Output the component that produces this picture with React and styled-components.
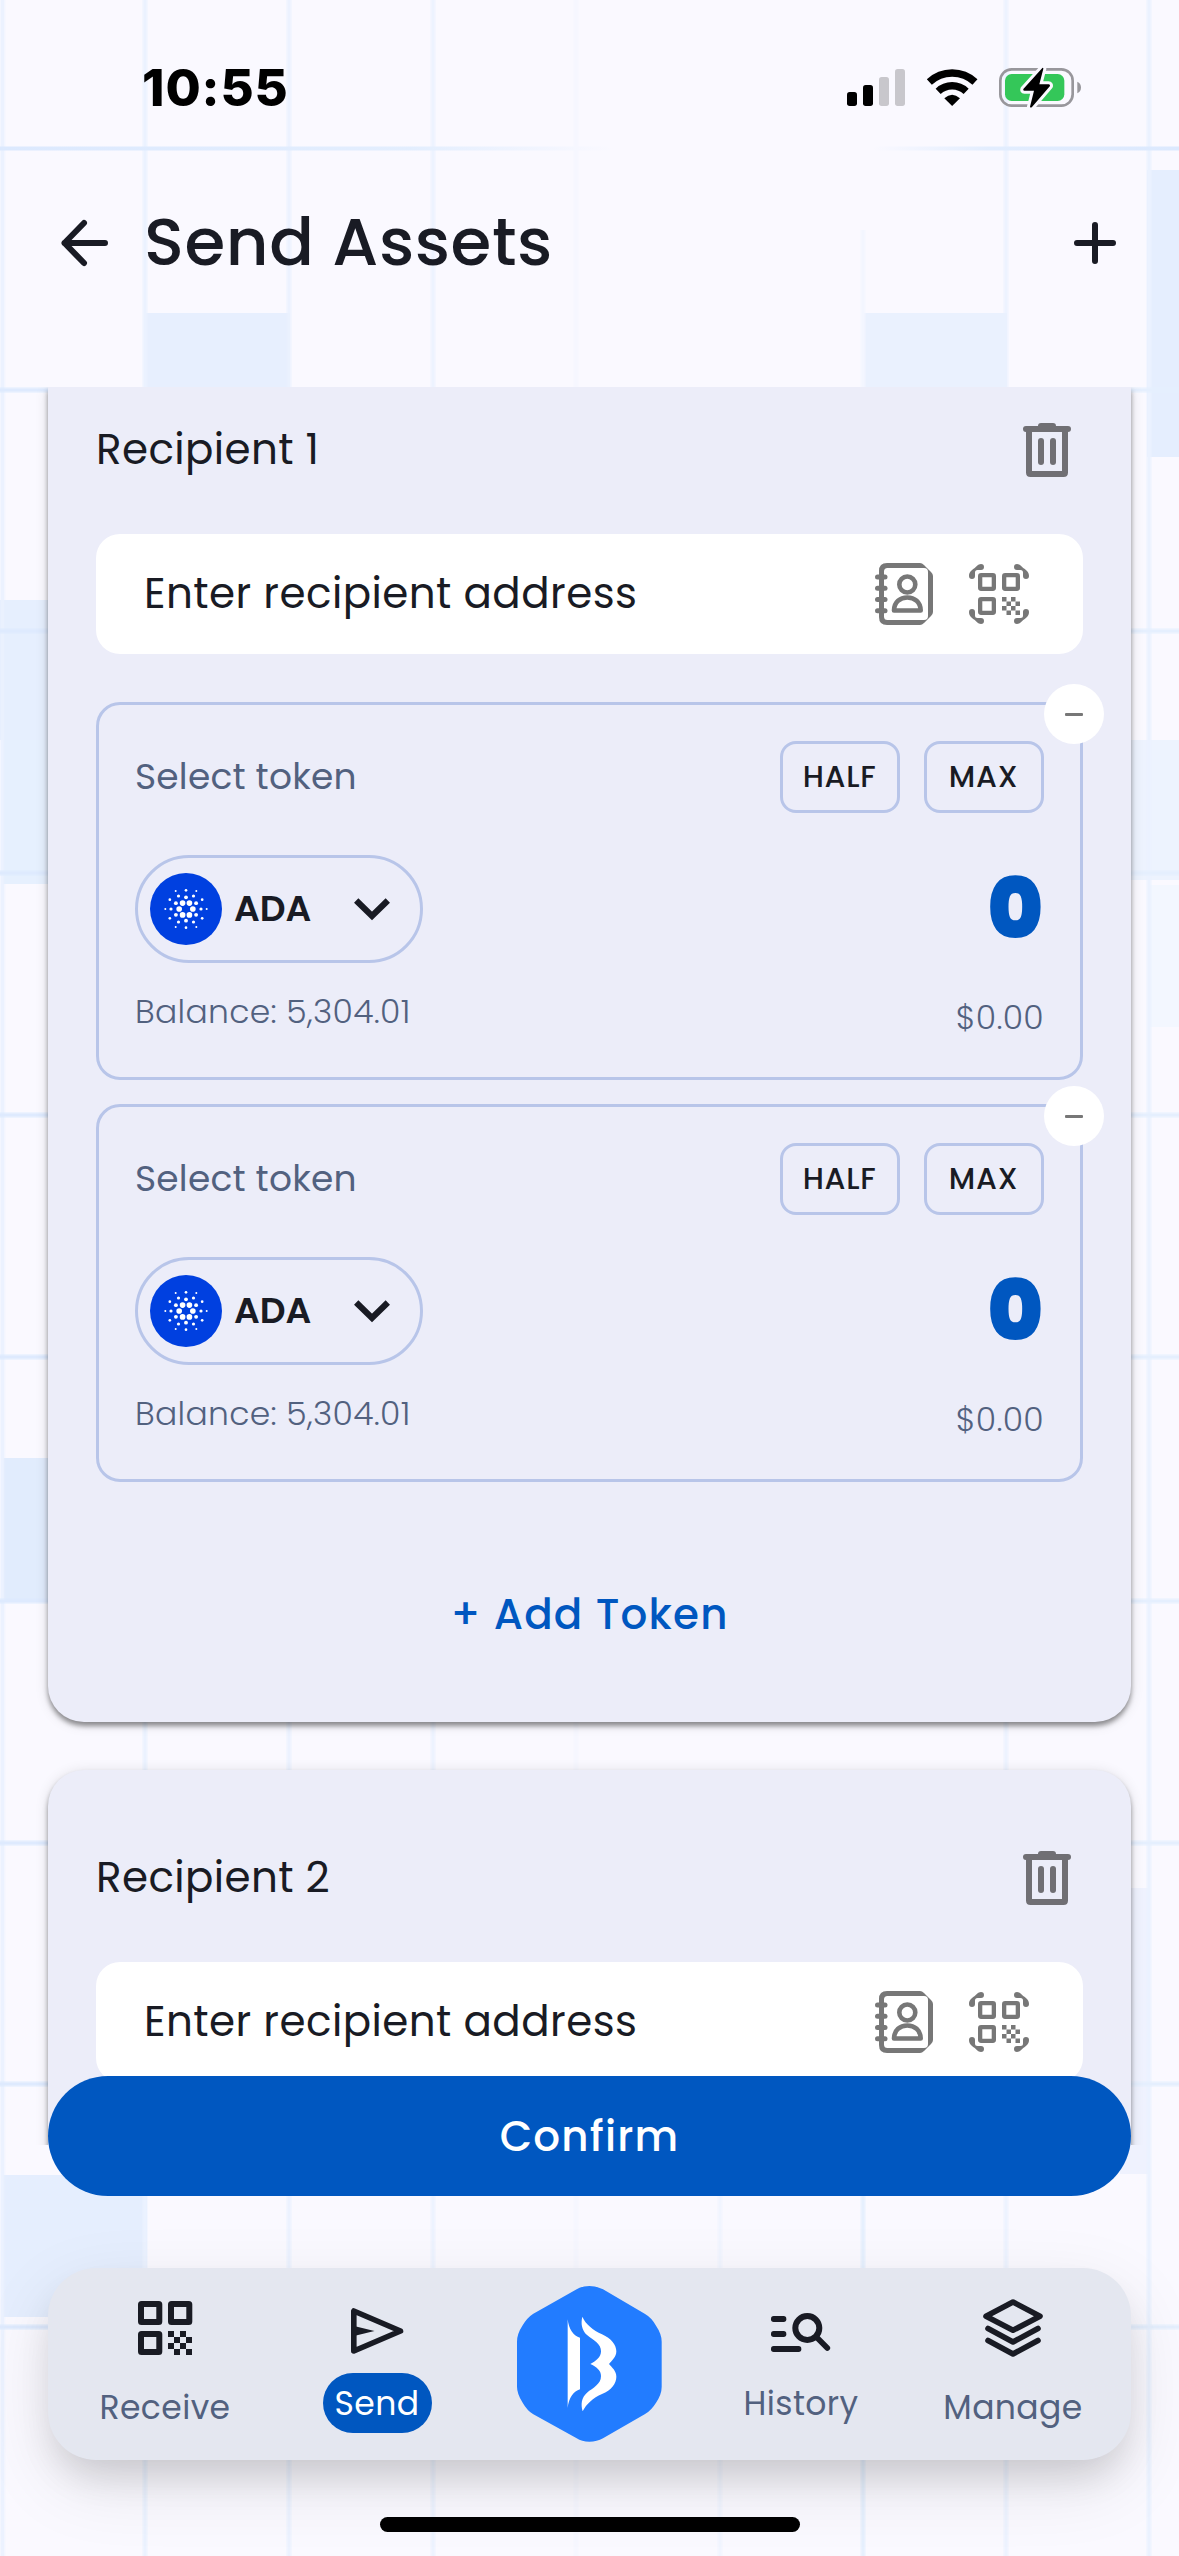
import React from "react";
import styled, { createGlobalStyle } from "styled-components";

const ink = "#191b24";
const muted = "#52617f";
const outline = "#b8c5e9";
const brand = "#0057c0";
const grey = "#777777";

const GlobalStyle = createGlobalStyle`
  *, *::before, *::after { box-sizing: border-box; }
  html, body { margin: 0; padding: 0; background: #faf9ff; }
  body {
    font-family: Poppins, Inter, "Open Sans", sans-serif;
    color: ${ink};
  }
  button {
    margin: 0; padding: 0; border: 0; background: none;
    font: inherit; color: inherit;
  }
  svg { display: block; flex: none; overflow: visible; }
`;

const Screen = styled.div`
  position: relative;
  width: 1179px;
  height: 2556px;
  overflow: hidden;
  display: flex;
  flex-direction: column;
  background: #faf9ff;
  isolation: isolate;
`;

const Backdrop = styled.svg`
  position: absolute;
  inset: 0;
  z-index: -1;
`;

const Label = styled.span`
  display: block;
  white-space: nowrap;
  line-height: ${(p) => p.$line || 48}px;
  font-size: ${(p) => p.$size}px;
  font-weight: ${(p) => p.$weight || 400};
  letter-spacing: ${(p) => p.$track || 0}px;
  color: ${(p) => p.$color || ink};
`;

const Clock = styled(Label)`
  font-family: Inter, "Liberation Sans", sans-serif;
  color: #000;
`;

const StatusBar = styled.div`
  flex: none;
  height: 175px;
  padding: 0 98px 0 142px;
  display: flex;
  align-items: center;
  justify-content: space-between;
`;

const StatusIcons = styled.div`
  display: flex;
  align-items: center;
  gap: 22px;
`;

const Header = styled.header`
  flex: none;
  height: 212px;
  padding: 0 63px 76px 61px;
  display: flex;
  align-items: center;
`;

const HeaderTitle = styled.h1`
  flex: 1;
  margin: 0 0 3px 36px;
`;

const IconButton = styled.button`
  display: grid;
  place-items: center;
`;

const ScrollArea = styled.main`
  flex: none;
  height: 1758px;
  overflow: hidden;
  display: flex;
  flex-direction: column;
  padding: 0 48px;
`;

const Card = styled.section`
  flex: none;
  padding: ${(p) => (p.$scrolled ? 3 : 48)}px 48px 0;
  height: ${(p) => p.$height}px;
  margin-bottom: 48px;
  border-radius: ${(p) => (p.$scrolled ? "0 0 36px 36px" : "36px")};
  background: #ecedf9;
  box-shadow: 0 4px 5px rgba(0, 0, 0, 0.4), 0 2px 14px rgba(0, 0, 0, 0.12);
`;

const CardHeader = styled.div`
  height: 120px;
  padding-right: 12px;
  display: flex;
  align-items: center;
  justify-content: space-between;
`;

const AddressField = styled.div`
  height: 120px;
  margin-top: 24px;
  padding: 0 54px 0 48px;
  border-radius: 24px;
  background: #fff;
  display: flex;
  align-items: center;
  gap: 36px;
`;

const Grow = styled.div`
  flex: 1;
`;

const TokenList = styled.div`
  margin-top: 48px;
  display: flex;
  flex-direction: column;
  gap: 24px;
`;

const TokenBox = styled.div`
  position: relative;
  height: 378px;
  padding: 36px;
  border: 3px solid ${outline};
  border-radius: 24px;
`;

const RemoveBadge = styled.button`
  position: absolute;
  top: -21px;
  right: -24px;
  width: 60px;
  height: 60px;
  border-radius: 50%;
  background: #fff;
  display: grid;
  place-items: center;
`;

const Dash = styled.span`
  width: 18px;
  height: 3px;
  border-radius: 1px;
  background: ${grey};
`;

const TokenTop = styled.div`
  height: 72px;
  display: flex;
  align-items: center;
  gap: 24px;
`;

const ChipButton = styled.button`
  width: 120px;
  height: 72px;
  padding-right: 1px;
  border: 3px solid ${outline};
  border-radius: 16px;
  display: grid;
  place-items: center;
`;

const TokenBody = styled.div`
  margin-top: 42px;
  display: flex;
  justify-content: space-between;
`;

const TokenSide = styled.div`
  display: flex;
  flex-direction: column;
  align-items: flex-start;
  gap: 25px;
`;

const AmountSide = styled.div`
  display: flex;
  flex-direction: column;
  align-items: flex-end;
  gap: 33px;
`;

const Amount = styled.div`
  padding: 2px 1px 0 0;
`;

const TokenPill = styled.button`
  width: 288px;
  height: 108px;
  padding: 0 30px 0 12px;
  border: 3px solid ${outline};
  border-radius: 54px;
  display: flex;
  align-items: center;
`;

const PillName = styled.div`
  flex: 1;
  padding-left: 12px;
  text-align: left;
`;

const AddToken = styled.button`
  width: 100%;
  height: 96px;
  margin-top: 85px;
  display: grid;
  place-items: center;
`;

const ConfirmButton = styled.button`
  position: relative;
  flex: none;
  height: 120px;
  margin: -69px 48px 0;
  padding-top: 1px;
  border-radius: 60px;
  background: ${brand};
  display: grid;
  place-items: center;
`;

const NavBar = styled.nav`
  flex: none;
  height: 192px;
  margin: 72px 48px 0;
  padding: 0 12px 0 11px;
  border-radius: 48px;
  background: #e4e7f0;
  box-shadow: 0 24px 72px rgba(0, 0, 0, 0.1), 0 22px 36px -8px rgba(0, 0, 0, 0.13);
  display: flex;
`;

const NavItem = styled.button`
  flex: 1;
  display: flex;
  flex-direction: column;
  align-items: center;
  justify-content: flex-start;
`;

const NavGlyph = styled.div`
  height: ${(p) => p.$slot}px;
  margin-bottom: ${(p) => p.$drop - p.$slot}px;
  display: grid;
  place-items: center;
`;

const NavPill = styled.div`
  height: 60px;
  min-width: 109px;
  padding: 1px 11px 0;
  border-radius: 30px;
  background: ${(p) => (p.$active ? brand : "transparent")};
  display: grid;
  place-items: center;
`;

const LogoSlot = styled.div`
  height: 192px;
  display: grid;
  place-items: center;
`;

const HomeIndicator = styled.div`
  flex: none;
  width: 420px;
  height: 15px;
  margin: 57px auto 0;
  border-radius: 8px;
  background: #000;
`;

const verticals = [
  [2.5, 0.9], [145, 1], [289, 0.9], [433, 0.8], [576, 0.2], [1006, 0.8], [1149, 1],
];
const horizontals = [390, 631, 873, 1115, 1357, 1601, 1843, 2084, 2327];
const tiles = [
  [145, 313, 145, 74, "#e7effe"],
  [862, 313, 145, 74, "#eaf1fe"],
  [1147, 170, 32, 287, "#e5eefe"],
  [0, 600, 60, 140, "#e6effe"],
  [3, 740, 60, 144, "#e6f0fe"],
  [3, 1458, 60, 143, "#e1ecfd"],
  [3, 2175, 144, 142, "#e5eefe"],
  [1120, 740, 59, 140, "#edf3fe"],
  [1149, 885, 30, 142, "#f3f7ff"],
  [1120, 1888, 28, 286, "#eff2fe"],
];

const Rule = ({ x, y, w, h, fill, opacity = 1 }) => {
  const tall = h > w;
  return (
    <g fill={fill} opacity={opacity}>
      <rect x={tall ? x - 3 : x} y={tall ? y : y - 3} width={tall ? 6 : w} height={tall ? h : 6} opacity="0.45" />
      <rect x={tall ? x - 1.5 : x} y={tall ? y : y - 1.5} width={tall ? 3 : w} height={tall ? h : 3} />
    </g>
  );
};

const GridBackdrop = () => (
  <Backdrop width="1179" height="2556" viewBox="0 0 1179 2556">
    <defs>
      <linearGradient id="topRule" x1="0" x2="1" y1="0" y2="0">
        <stop offset="0" stopColor="#dce9fe" />
        <stop offset="0.35" stopColor="#e3eefe" />
        <stop offset="0.52" stopColor="#faf9ff" />
        <stop offset="0.74" stopColor="#faf9ff" />
        <stop offset="0.84" stopColor="#e2edfe" />
        <stop offset="1" stopColor="#dce9fe" />
      </linearGradient>
    </defs>
    {tiles.map(([x, y, w, h, c]) => (
      <rect key={`${x}-${y}`} x={x} y={y} width={w} height={h} fill={c} />
    ))}
    {verticals.map(([x, o]) => (
      <Rule key={x} x={x} y={0} w={0} h={2556} fill="#ebf2ff" opacity={o} />
    ))}
    <Rule x={863} y={230} w={0} h={160} fill="#f3f6ff" />
    <Rule x={863} y={2190} w={0} h={366} fill="#e6f0fe" />
    <Rule x={720} y={2190} w={0} h={366} fill="#f1f5ff" />
    <rect x="0" y="146.500" width="1179" height="4" fill="url(#topRule)" />
    {horizontals.map((y) => (
      <g key={y}>
        <Rule x={0} y={y} w={60} h={0} fill="#deeafe" />
        <Rule x={1120} y={y} w={59} h={0} fill="#e5effe" />
      </g>
    ))}
  </Backdrop>
);

const SignalIcon = () => (
  <svg width="58" height="37" viewBox="198 87 174 111">
    <rect x="198" y="156" width="30" height="42" rx="8" />
    <rect x="246" y="135" width="30" height="63" rx="8" />
    <rect x="294" y="111" width="30" height="87" rx="8" fill="#c8c7cc" />
    <rect x="342" y="87" width="30" height="111" rx="8" fill="#c8c7cc" />
  </svg>
);

const WifiIcon = () => (
  <svg width="50.3" height="37" viewBox="439 87 151 111">
    <path d="M446 126A100 100 0 0 1 583 126" fill="none" stroke="#000" strokeWidth="22" />
    <path d="M472.500 154A61 61 0 0 1 556.500 154" fill="none" stroke="#000" strokeWidth="22" />
    <path d="M514.500 198L491 175Q514.500 153 538 175Z" />
  </svg>
);

const BatteryIcon = () => (
  <svg width="82" height="41" viewBox="657 81 246 123">
    <rect x="661" y="88" width="217" height="109" rx="34" fill="none" stroke="#98979c" strokeWidth="8" />
    <path d="M892 125Q903 130 903 142.500T892 160Z" fill="#98979c" />
    <rect x="675" y="102" width="178" height="81" rx="20" fill="#34c759" />
    <path
      d="M787 84L730 147Q728 152 733 152H762L750 200Q751 205 756 201L810 138Q811 133 806 133H778L790 86Q790 81 787 84Z"
      fill="#000" stroke="#faf9ff" strokeWidth="18" strokeLinejoin="round" paintOrder="stroke"
    />
  </svg>
);

const BackIcon = () => (
  <svg width="47" height="46" viewBox="0 0 47 46" fill="none" stroke={ink} strokeWidth="6" strokeLinecap="round" strokeLinejoin="round">
    <path d="M23 3L3.500 23L23 43M3.500 23H44" />
  </svg>
);

const PlusIcon = () => (
  <svg width="42" height="42" viewBox="0 0 42 42" stroke={ink} strokeWidth="6" strokeLinecap="round">
    <path d="M21 3V39M3 21H39" />
  </svg>
);

const TrashIcon = () => (
  <svg width="48" height="54" viewBox="0 0 48 54" fill="#706f74">
    <path d="M18 0H30Q33 0 33 3H45A3 3 0 0 1 45 9H3A3 3 0 0 1 3 3H15Q15 0 18 0Z" />
    <path d="M6 7V49.500Q6 51 7.500 51H40.500Q42 51 42 49.500V7" fill="none" stroke="#706f74" strokeWidth="6" />
    <rect x="15" y="15" width="6" height="27" rx="3" />
    <rect x="27" y="15" width="6" height="27" rx="3" />
  </svg>
);

const ContactIcon = () => (
  <svg width="58" height="62" viewBox="0 0 58 62" fill={grey}>
    <path
      fillRule="evenodd"
      d="M12 0H45Q47 0 49 2L56 9Q58 11 58 13V49Q58 51 56 53L49 60Q47 62 45 62H12Q4 62 4 54V8Q4 0 12 0ZM12.500 5Q9 5 9 8.500V53.500Q9 57 12.500 57H49Q53 57 53 53V9Q53 5 49 5Z"
    />
    <rect x="0" y="11.500" width="12.500" height="5" rx="2.500" />
    <rect x="0" y="22.800" width="12.500" height="5" rx="2.500" />
    <rect x="0" y="34" width="12.500" height="5" rx="2.500" />
    <rect x="0" y="45.200" width="12.500" height="5" rx="2.500" />
    <g fill="none" stroke={grey} strokeWidth="4.600" strokeLinejoin="round">
      <circle cx="32.300" cy="21.500" r="8" />
      <path d="M19 47.500H45.700C45.500 39 39.500 34.500 32.300 34.500S19.200 39 19 47.500Z" />
    </g>
  </svg>
);

const Checker = ({ x, y, cell }) =>
  [0, 1, 2, 3].flatMap((r) =>
    [0, 1].map((c) => (
      <rect
        key={`${r}${c}`}
        x={x + (c * 2 + (r % 2)) * cell}
        y={y + r * cell}
        width={cell}
        height={cell}
      />
    ))
  );

const corner = "M3 15A3 3 0 0 1 0 12C0 8 3 6 5 4.500S9 0 12 0A3 3 0 0 1 12 6H8.500Q6 6 6 8.500V12A3 3 0 0 1 3 15Z";

const ScanIcon = () => (
  <svg width="60" height="60" viewBox="0 0 60 60" fill={grey}>
    <path d={corner} />
    <path d={corner} transform="matrix(-1 0 0 1 60 0)" />
    <path d={corner} transform="matrix(1 0 0 -1 0 60)" />
    <path d={corner} transform="matrix(-1 0 0 -1 60 60)" />
    <g fill="none" stroke={grey} strokeWidth="4.300">
      <rect x="11.150" y="11.150" width="13.700" height="13.700" rx="1" />
      <rect x="35.150" y="11.150" width="13.700" height="13.700" rx="1" />
      <rect x="11.150" y="35.150" width="13.700" height="13.700" rx="1" />
    </g>
    <Checker x={33} y={33} cell={4.5} />
  </svg>
);

const QrIcon = () => (
  <svg width="54" height="54" viewBox="0 0 54 54" fill={ink}>
    <g fill="none" stroke={ink} strokeWidth="6">
      <rect x="3" y="3" width="18.300" height="18" rx="0.500" />
      <rect x="33" y="3" width="18.300" height="18" rx="0.500" />
      <rect x="3" y="33" width="18.300" height="18" rx="0.500" />
    </g>
    <Checker x={30} y={30} cell={6} />
  </svg>
);

const SendIcon = () => (
  <svg width="52" height="46" viewBox="0 0 52 46">
    <path d="M2.800 3V43L49.500 23Z" fill="none" stroke={ink} strokeWidth="5.600" strokeLinejoin="round" />
    <path d="M5 18.500L23.500 23L5 27.500Z" fill={ink} />
  </svg>
);

const HistoryIcon = () => (
  <svg width="59.300" height="39" viewBox="811 111 178 117" fill={ink}>
    <rect x="811" y="120" width="46" height="18" rx="8" />
    <rect x="811" y="165" width="46" height="18" rx="8" />
    <rect x="811" y="210" width="91" height="18" rx="8" />
    <circle cx="920" cy="156" r="36" fill="none" stroke={ink} strokeWidth="18" />
    <path d="M948 184L980 216" stroke={ink} strokeWidth="17" strokeLinecap="round" />
  </svg>
);

const LayersIcon = () => (
  <svg width="60" height="58" viewBox="0 0 60 58" fill="none" stroke={ink} strokeWidth="5.600" strokeLinejoin="round" strokeLinecap="round">
    <path d="M30 3L57 17.200L30 31.300L3 17.200Z" />
    <path d="M5 29.500L30 43L55 29.500" />
    <path d="M5 41.500L30 55L55 41.500" />
  </svg>
);

const Logo = () => (
  <svg width="144.700" height="155.700" viewBox="52 30 434 467" fill="#fff">
    <path
      d="M231 40Q248 30 269 30T310 40L435 113Q456 125 469 149Q486 174 486 197V332Q486 355 469 380Q456 402 435 415L310 487Q292 497 269 497T231 487L101 415Q82 403 69 380Q52 354 52 332V197Q52 174 69 148Q82 125 101 113Z"
      fill="#227cff"
    />
    <path d="M204 130C207 160 222 180 241 185V340C222 346 207 365 204 396Z" />
    <path d="M248 122C258 145 280 162 307 175C335 188 350 207 350 226C350 244 336 254 328 264C336 274 350 284 350 302C350 323 335 342 307 354C280 366 260 384 249 406C243 385 245 365 262 350C280 335 304 325 304 300C304 283 290 272 272 264C290 255 304 243 304 226C304 203 282 193 262 177C246 162 243 142 248 122Z" />
  </svg>
);

const ring = (d, r, start) =>
  [0, 1, 2, 3, 4, 5].map((i) => {
    const a = ((start + i * 60) * Math.PI) / 180;
    return <circle key={`${d}-${i}`} cx={d * Math.cos(a)} cy={d * Math.sin(a)} r={r} />;
  });

const AdaIcon = () => (
  <svg width="72" height="72" viewBox="-108 -108 216 216" fill="#fff">
    <circle r="108" fill="#0040e0" />
    {ring(20.5, 8.5, 0)}
    {ring(35, 5.8, 30)}
    {ring(45, 4.8, 0)}
    {ring(56, 4, 30)}
    {ring(62, 3, 0)}
  </svg>
);

const ChevronIcon = () => (
  <svg width="36" height="22" viewBox="0 0 36 22">
    <path d="M2.200 2.500L18 18L33.800 2.500" fill="none" stroke={ink} strokeWidth="6.200" />
  </svg>
);

const Token = () => (
  <TokenBox>
    <RemoveBadge aria-label="Remove token"><Dash /></RemoveBadge>
    <TokenTop>
      <Grow><Label $size={36} $track={0.2} $color={muted}>Select token</Label></Grow>
      <ChipButton><Label $size={30} $weight={500} $track={0.7} $line={44}>HALF</Label></ChipButton>
      <ChipButton><Label $size={30} $weight={500} $track={0.7} $line={44}>MAX</Label></ChipButton>
    </TokenTop>
    <TokenBody>
      <TokenSide>
        <TokenPill>
          <AdaIcon />
          <PillName><Label $size={36} $weight={600}>ADA</Label></PillName>
          <ChevronIcon />
        </TokenPill>
        <Label $size={33} $weight={300} $track={0.3} $color={muted}>Balance: 5,304.01</Label>
      </TokenSide>
      <AmountSide>
        <Amount><Label $size={84} $weight={900} $line={104} $color={brand}>0</Label></Amount>
        <Label $size={33} $weight={300} $track={0.3} $color={muted}>$0.00</Label>
      </AmountSide>
    </TokenBody>
  </TokenBox>
);

const Recipient = ({ index, scrolled, height, tokens = 0 }) => (
  <Card $scrolled={scrolled} $height={height}>
    <CardHeader>
      <Label $size={42} $track={0.4} $line={50}>Recipient {index}</Label>
      <IconButton aria-label="Remove recipient"><TrashIcon /></IconButton>
    </CardHeader>
    <AddressField>
      <Grow><Label $size={42} $track={0.45} $line={52}>Enter recipient address</Label></Grow>
      <ContactIcon />
      <ScanIcon />
    </AddressField>
    {tokens > 0 && (
      <>
        <TokenList>
          {Array.from({ length: tokens }, (_, i) => <Token key={i} />)}
        </TokenList>
        <AddToken><Label $size={42} $weight={500} $track={1.2} $color={brand}>+ Add Token</Label></AddToken>
      </>
    )}
  </Card>
);

const navItems = [
  { name: "Receive", Icon: QrIcon, slot: 120, drop: 109 },
  { name: "Send", Icon: SendIcon, slot: 126, drop: 105, active: true },
  { name: "logo" },
  { name: "History", Icon: HistoryIcon, slot: 129, drop: 105 },
  { name: "Manage", Icon: LayersIcon, slot: 120, drop: 109 },
];

export default function App() {
  return (
    <>
      <GlobalStyle />
      <Screen>
        <GridBackdrop />
        <StatusBar>
          <Clock $size={51} $weight={800} $track={0.9}>10:55</Clock>
          <StatusIcons><SignalIcon /><WifiIcon /><BatteryIcon /></StatusIcons>
        </StatusBar>
        <Header>
          <IconButton aria-label="Back"><BackIcon /></IconButton>
          <HeaderTitle><Label $size={66} $weight={500} $line={80} $track={0.6}>Send Assets</Label></HeaderTitle>
          <IconButton aria-label="Add recipient"><PlusIcon /></IconButton>
        </Header>
        <ScrollArea>
          <Recipient index={1} scrolled height={1335} tokens={2} />
          <Recipient index={2} height={600} />
        </ScrollArea>
        <ConfirmButton><Label $size={42} $weight={500} $track={1.2} $color="#fff">Confirm</Label></ConfirmButton>
        <NavBar>
          {navItems.map(({ name, Icon, slot, drop, active }) =>
            Icon ? (
              <NavItem key={name}>
                <NavGlyph $slot={slot} $drop={drop}><Icon /></NavGlyph>
                <NavPill $active={active}>
                  <Label $size={33} $track={0.4} $color={active ? "#fff" : muted}>{name}</Label>
                </NavPill>
              </NavItem>
            ) : (
              <NavItem key={name} aria-label="Home"><LogoSlot><Logo /></LogoSlot></NavItem>
            )
          )}
        </NavBar>
        <HomeIndicator />
      </Screen>
    </>
  );
}
